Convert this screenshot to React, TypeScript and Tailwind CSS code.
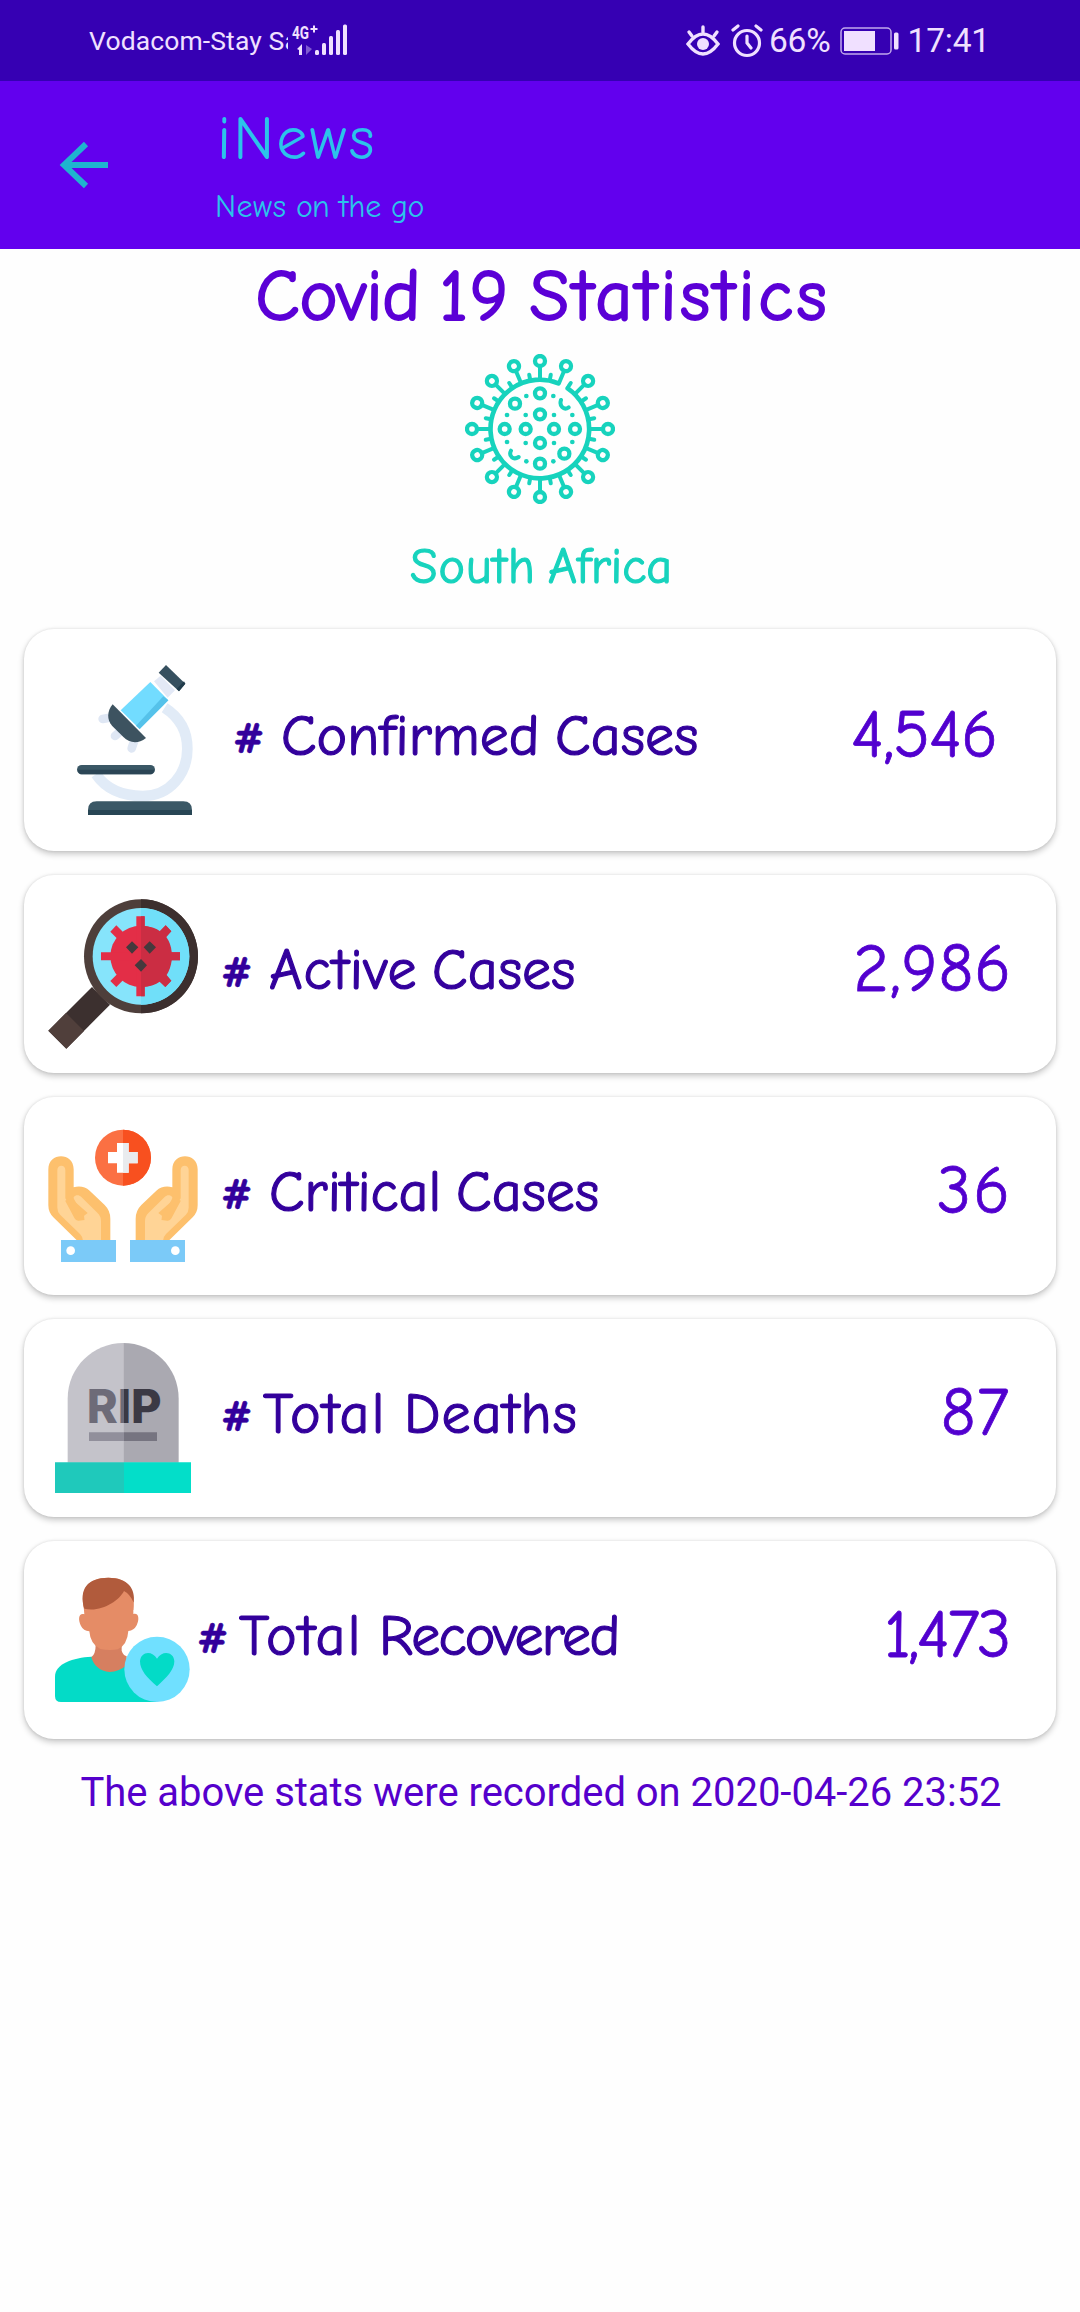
import type { ReactNode } from "react";

const HAND = "font-['Coming_Soon','Comic_Neue',cursive]";

const spikeAngles = Array.from({ length: 16 }, (_, i) => i * 22.5);
const virusRings = [[270, 160], [195, 191], [270, 223], [164, 267], [227, 267], [312, 267], [375, 267], [270, 309], [343, 341], [270, 371]];
const virusDots = [[229, 168], [310, 168], [171, 225], [227, 225], [312, 225], [367, 225], [171, 306], [227, 309], [312, 309], [367, 306], [229, 364], [310, 364]];

function VirusIcon() {
  return (
    <svg className="size-[150px]" viewBox="45 42 450 450" fill="none" stroke="#17d3bd" strokeWidth="12" strokeLinecap="round">
      <path d="M353 145 A148 148 0 1 1 325 130" strokeWidth="14" />
      {spikeAngles.map((a) => (
        <g key={a} transform={`rotate(${a} 270 267)`}>
          <circle cx="270" cy="63" r="15" strokeWidth="13" />
          <path d="M270 80V117" strokeWidth="12" />
        </g>
      ))}
      {spikeAngles.map((a) => (
        <path key={a} d="M270 113V101" strokeWidth="12" transform={`rotate(${a + 11.25} 270 267)`} />
      ))}
      {virusRings.map(([x, y]) => (
        <circle key={`${x}-${y}`} cx={x} cy={y} r="15" strokeWidth="13" />
      ))}
      {virusDots.map(([x, y]) => (
        <circle key={`${x}-${y}`} cx={x} cy={y} r="7" fill="#17d3bd" stroke="none" />
      ))}
      <path d="M333 180C327 197 341 213 356 202M183 332C175 348 190 362 206 351" />
    </svg>
  );
}

function MicroscopeIcon() {
  return (
    <svg className="size-[150px]" viewBox="180 134 450 450">
      <path d="M288 462C322 512 374 527 428 527C510 527 562 460 562 385C562 330 536 289 494 262" fill="none" stroke="#e1ebf7" strokeWidth="32" />
      <g stroke="#dfe7f4" strokeWidth="26" strokeLinecap="round">
        <path d="M308 296L340 290M345 347L370 325M395 384L405 355" />
      </g>
      <path d="M462 183L482 166L525 210L503 232Z" fill="#e3e9f6" />
      <path d="M451 185L505 240L419 326L362 270Z" fill="#72dcff" />
      <path d="M490 228L505 240L419 326L408 316Z" fill="#55c2ea" />
      <path d="M498 134L556 190L537 213L476 157Z" fill="#36505f" />
      <path d="M552 183L556 190L537 213L530 206Z" fill="#213c4b" />
      <path d="M338 252L438 353C412 374 386 366 371 351L336 316C320 299 321 272 338 252Z" fill="#3d5360" />
      <rect x="231" y="434" width="234" height="28" rx="14" fill="#3a5765" />
      <path d="M233 448H463Q460 462 450 462H246Q236 462 233 448Z" fill="#2b4555" />
      <path d="M264 585V569Q264 543 290 543H550Q576 543 576 569V585Z" fill="#3b5866" />
      <path d="M264 569H576V585H264Z" fill="#284655" />
    </svg>
  );
}

function MagnifierIcon() {
  return (
    <svg className="size-[150px]" viewBox="144 86 450 450">
      <path d="M276 350L330 403L199 535L145 481Z" fill="#3c302f" />
      <path d="M198 428L252 482L199 535L145 481Z" fill="#503f3b" />
      <circle cx="423" cy="258" r="171" fill="#4e3f3b" />
      <path d="M423 87A171 171 0 0 1 423 429Z" fill="#3c2f2e" />
      <circle cx="423" cy="258" r="145" fill="#86e4fb" />
      <path d="M423 113A145 145 0 0 1 423 403Z" fill="#70dff9" />
      <g fill="#e32e47">
        <circle cx="423" cy="258" r="92" />
        <path d="M409 138H434V378H409ZM303 246H540V270H303Z" />
        <path d="M349 165L514 331L496 350L331 184Z" />
        <path d="M497 165L514 183L349 350L331 332Z" />
      </g>
      <path d="M423 138H434V167Q463 170 480 183L497 165L514 183L499 200Q514 222 515 246H540V270H515Q512 296 500 314L514 331L496 350L479 334Q460 347 434 349V378H423Z" fill="#cb2d43" />
      <g fill="#45393d">
        <path d="M396 213L415 231L396 250L378 231ZM449 213L468 231L449 250L431 231ZM423 266L441 285L423 304L404 285Z" />
      </g>
    </svg>
  );
}

function Hand() {
  return (
    <g>
      <path d="M145 238C145 186 221 186 221 238V292C240 287 256 291 269 302L314 345Q331 362 331 386V452H232L160 382Q145 367 145 346Z" fill="#fdc06d" />
      <path d="M172 240C172 223 196 223 196 240V325L235 391L263 369L222 333C214 320 232 309 244 321L292 368Q303 378 303 394V452H249Q248 440 240 432L181 375Q172 366 172 353Z" fill="#ffd496" />
      <path d="M207 326L235 379L252 377" fill="none" stroke="#fdc06d" strokeWidth="26" strokeLinejoin="round" />
      <path d="M183 450H348V516H183Z" fill="#7bcaf8" />
      <circle cx="212" cy="482" r="13" fill="#fff" />
    </g>
  );
}

function CareIcon() {
  return (
    <svg className="size-[150px]" viewBox="144 93 450 450">
      <circle cx="369" cy="203" r="84" fill="#fb7043" />
      <path d="M369 119A84 84 0 0 1 369 287Z" fill="#f8501f" />
      <path d="M351 159H386V186H413V220H386V248H351V220H324V186H351Z" fill="#fff" />
      <path d="M369 159H386V186H413V220H386V248H369Z" fill="#e9ebee" />
      <Hand />
      <g transform="translate(738 0) scale(-1 1)">
        <Hand />
      </g>
    </svg>
  );
}

function TombstoneIcon() {
  return (
    <svg className="size-[150px]" viewBox="144 98 450 450">
      <defs>
        <linearGradient id="rip-fill" gradientUnits="userSpaceOnUse" x1="267" x2="480" y1="0" y2="0">
          <stop offset="0.493" stopColor="#6d6b78" />
          <stop offset="0.493" stopColor="#3b3944" />
        </linearGradient>
      </defs>
      <path d="M203 457V265C203 170 280 98 370 98V457Z" fill="#c4c3ca" />
      <path d="M370 98C460 98 536 170 536 265V457H370Z" fill="#aaa9b1" />
      <text x="260" y="339" textLength="225" lengthAdjust="spacingAndGlyphs" fontSize="138" className="font-['Inter',sans-serif] font-extrabold" fill="url(#rip-fill)">RIP</text>
      <path d="M267 366H372V392H267Z" fill="#918f9b" />
      <path d="M372 366H471V392H372Z" fill="#767480" />
      <path d="M165 456H372V548H165Z" fill="#1fc9bb" />
      <path d="M372 456H573V548H372Z" fill="#03dec9" />
    </svg>
  );
}

function RecoveredIcon() {
  return (
    <svg className="size-[150px]" viewBox="144 105 450 450">
      <path d="M165 440C165 400 220 383 274 380H375L471 516H183Q165 516 165 498Z" fill="#03dbc7" />
      <path d="M287 345H365V362Q368 374 380 379V406Q356 426 329 426C300 425 280 405 274 382Q287 372 287 345Z" fill="#d67f60" />
      <path d="M250 220H400V252C418 248 418 270 410 286Q402 302 385 303Q382 345 353 358Q328 362 301 357Q271 343 268 304Q250 302 243 288C233 268 236 248 253 253Z" fill="#e58c66" />
      <path d="M253 240C237 180 262 143 325 143C386 143 407 180 400 240Z" fill="#e58c66" />
      <path d="M253 236C236 178 262 143 325 143C384 143 407 176 401 218C392 198 384 190 372 183C356 214 302 248 253 236Z" fill="#b15b3c" />
      <circle cx="471" cy="418" r="98" fill="#70e0ff" />
      <path d="M471 469C440 442 420 420 420 394C422 364 456 360 471 386C486 360 522 364 523 394C523 420 500 442 471 469Z" fill="#03dbc7" />
    </svg>
  );
}

function StatCard({ icon, words, value, roomy = false }: { icon: ReactNode; words: ReactNode; value: ReactNode; roomy?: boolean }) {
  return (
    <section
      className={`flex items-center rounded-[30px] bg-white shadow-[0_3px_6px_rgba(0,0,0,0.22),0_0_3px_rgba(0,0,0,0.10)] ${roomy ? "h-[222px] px-9" : "h-[198px] px-6"}`}
    >
      {icon}
      <h2 className="mb-[2px] flex items-baseline whitespace-nowrap text-[58px] leading-[70px] text-[#33009c] [-webkit-text-stroke:1.2px_#33009c]">{words}</h2>
      <span className="mb-[11px] ml-auto mr-[20px] whitespace-nowrap text-[68px] leading-[70px] text-[#5200cf] [-webkit-text-stroke:0.8px_#5200cf]">{value}</span>
    </section>
  );
}

function Hash({ className }: { className: string }) {
  return <span className={`-translate-x-px -translate-y-[2px] text-[44px] font-bold [-webkit-text-stroke:0.6px_#33009c] ${className}`}>#</span>;
}

function StatusBar() {
  return (
    <div className="flex h-[81px] items-center bg-[#3600b3] pl-[89px] pr-[90px] font-['Roboto',sans-serif] text-[#f0e0ff]">
      <span className="w-[199px] overflow-hidden whitespace-nowrap text-[26.5px] leading-[34px] tracking-[0.12px]">Vodacom-Stay Sa</span>
      <svg className="ml-[3px] h-[34px] w-[60px]" viewBox="0 0 60 34" fill="currentColor">
        <text x="1" y="15" fontSize="18" textLength="17" lengthAdjust="spacingAndGlyphs" fontWeight="700">4G</text>
        <path d="M22 1.5h2v2.5h2.5v2H24v2.500h-2V6h-2.500V4H22z" />
        <path d="M6 25L11 20V31H8V26Z" />
        <path d="M15 21V31L21 25Z" opacity=".4" />
        <rect x="24" y="26" width="4" height="5" rx="1.500" />
        <rect x="31" y="19" width="4" height="12" rx="1.500" />
        <rect x="38" y="12" width="4" height="19" rx="1.500" />
        <rect x="45" y="6" width="4" height="25" rx="1.500" />
        <rect x="52" y="0.500" width="4" height="30.500" rx="1.500" />
      </svg>
      <div className="ml-auto flex items-center">
        <svg className="h-[34px] w-[36px]" viewBox="0 0 36 34" fill="none" stroke="currentColor" strokeWidth="3.400" strokeLinecap="round">
          <path d="M3 20Q18 0 33 20Q18 40 3 20Z" />
          <path d="M18 3V8M4 8L7 12M32 8L29 12" />
          <circle cx="18" cy="20" r="6" fill="currentColor" stroke="none" />
        </svg>
        <svg className="ml-[10px] h-[34px] w-[32px]" viewBox="0 0 32 34" fill="none" stroke="currentColor" strokeWidth="3.200" strokeLinecap="round">
          <circle cx="16" cy="19" r="12.500" />
          <path d="M16 12V19L20 24M2 6L7 2M30 6L25 2" />
        </svg>
        <span className="ml-[6px] text-[33.5px] leading-[40px] tracking-[-0.2px]">66%</span>
        <svg className="ml-[9px] h-[28px] w-[60px]" viewBox="0 0 60 28">
          <rect x="1" y="1" width="50" height="26" rx="4" fill="none" stroke="currentColor" strokeOpacity=".75" strokeWidth="1.500" />
          <rect x="4" y="4" width="31" height="20" fill="currentColor" />
          <rect x="54" y="5.500" width="4.500" height="17" rx="1.500" fill="currentColor" />
        </svg>
        <span className="ml-[8px] text-[33.5px] leading-[40px] tracking-[-0.2px]">17:41</span>
      </div>
    </div>
  );
}

export default function App() {
  return (
    <div className={`flex min-h-[2312px] w-[1080px] flex-col bg-[#fefefe] ${HAND}`}>
      <StatusBar />
      <header className="flex h-[168px] items-start bg-[#6200ee] text-[#2cc3ea]">
        <svg className="ml-[59px] mt-[60px] h-[48px] w-[50px]" viewBox="0 0 50 48" fill="none" stroke="#1fb4cf" strokeWidth="6">
          <path d="M27 3L5 24L27 45M5 24H49" />
        </svg>
        <div className="ml-[106px] pt-[20px]">
          <h1 className="pl-[2px] text-[62px] leading-[76px] tracking-[2.2px]">iNews</h1>
          <p className="flex h-[60px] text-[32px] leading-[60px]">
            <span className="w-[81px] tracking-[0.5px]">News</span>
            <span className="w-[43px] tracking-[-1px]">on</span>
            <span className="w-[52px]">the</span>
            <span className="tracking-[-0.5px]">go</span>
          </p>
        </div>
      </header>
      <main className="flex flex-col items-center">
        <h2 className="mt-[3px] flex h-[90px] w-[569px] whitespace-nowrap text-[72px] leading-[90px] text-[#5b00d6] [-webkit-text-stroke:2px_#5b00d6]">
          <span className="w-[184px] shrink-0 tracking-[-0.3px]">Covid</span>
          <span className="w-[90px] shrink-0 tracking-[2px]">19</span>
          <span className="shrink-0 tracking-[3.7px]">Statistics</span>
        </h2>
        <div className="mt-[12px]">
          <VirusIcon />
        </div>
        <p className="mt-[31px] flex h-[64px] w-[260px] whitespace-nowrap text-[50px] leading-[64px] text-[#17d3bd] [-webkit-text-stroke:1.2px_#17d3bd]">
          <span className="w-[138px] shrink-0 tracking-[1px]">South</span>
          <span>Africa</span>
        </p>
        <div className="mt-[30px] flex w-[1032px] flex-col gap-6">
          <StatCard
            roomy
            icon={<MicroscopeIcon />}
            words={
              <>
                <Hash className="ml-[24px] w-[47px]" />
                <span className="w-[274px]">Confirmed</span>
                <span className="tracking-[0.2px]">Cases</span>
              </>
            }
            value={<span className="mr-[3px] tracking-[-1px]">4,546</span>}
          />
          <StatCard
            icon={<MagnifierIcon />}
            words={
              <>
                <Hash className="ml-[24px] w-[47px]" />
                <span className="w-[163px] tracking-[0.8px]">Active</span>
                <span className="tracking-[0.2px]">Cases</span>
              </>
            }
            value={<span className="tracking-[0.8px]">2,986</span>}
          />
          <StatCard
            icon={<CareIcon />}
            words={
              <>
                <Hash className="ml-[24px] w-[47px]" />
                <span className="w-[187px]">Critical</span>
                <span className="tracking-[0.1px]">Cases</span>
              </>
            }
            value={<span className="tracking-[2px]">36</span>}
          />
          <StatCard
            icon={<TombstoneIcon />}
            words={
              <>
                <Hash className="ml-[24px] w-[41px]" />
                <span className="w-[141px] tracking-[2.200px]">Total</span>
                <span className="tracking-[1.100px]">Deaths</span>
              </>
            }
            value={<span className="mr-[2px] tracking-[1px]">87</span>}
          />
          <StatCard
            icon={<RecoveredIcon />}
            words={
              <>
                <Hash className="w-[41px]" />
                <span className="w-[140px] tracking-[2.200px]">Total</span>
                <span className="tracking-[-1.700px]">Recovered</span>
              </>
            }
            value={<span className="mr-[3px] tracking-[-2.500px]">1,473</span>}
          />
        </div>
        <p className="mt-[30px] whitespace-nowrap pl-[2px] font-['Roboto',sans-serif] text-[40px] leading-[48px] tracking-[-0.03px] text-[#5500cc]">The above stats were recorded on 2020-04-26 23:52</p>
      </main>
    </div>
  );
}
